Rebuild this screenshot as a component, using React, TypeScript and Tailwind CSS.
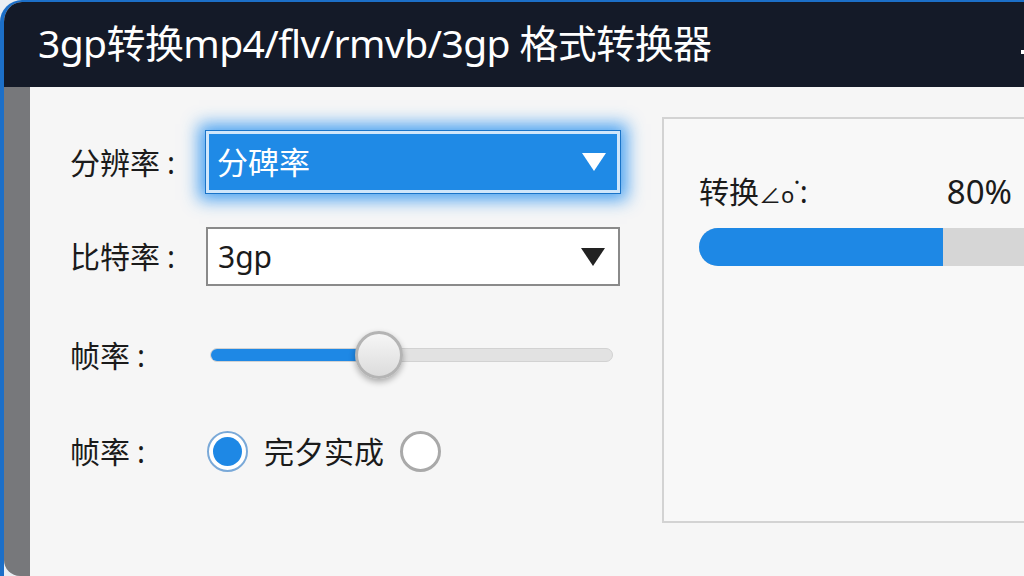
import React from "react";

const cjk = { fontFamily: '"Noto Sans", "Noto Sans CJK SC", sans-serif' };

function Triangle({ color }: { color: string }) {
  return (
    <svg width="26" height="20" viewBox="0 0 26 20">
      <path d="M1 1 H25 L13 19 Z" fill={color} />
    </svg>
  );
}

function Label({ text, width }: { text: string; width: string }) {
  return (
    <span className={`${width} shrink-0`}>
      {text}
      <span className="ml-[7px]">:</span>
    </span>
  );
}

export default function App() {
  return (
    <div className="w-[1024px] h-[576px] overflow-hidden bg-[#0b0d12]" style={cjk}>
      <div className="h-full bg-[#e9eef3]">
        <div className="h-full rounded-tl-[22px] border-l-[4px] border-t-[2px] border-[#1c6fc8] overflow-hidden flex flex-col">
          {/* title bar */}
          <div className="h-[85px] shrink-0 bg-[#141a28] flex items-center justify-between pl-[34px]">
            <h1 className="text-white text-[39px] tracking-[-0.6px] leading-none mt-[-4px]">
              3gp转换mp4/flv/rmvb/3gp 格式转换器
            </h1>
            <div className="w-[3px] h-[4px] bg-white mt-[14px]" />
          </div>

          <div className="flex flex-1 min-h-0">
            <div className="w-[26px] shrink-0 bg-[#77787b] rounded-bl-[16px]" />

            <div className="flex-1 bg-[#f6f6f6] flex">
              {/* settings column */}
              <div className="w-[632px] shrink-0 pl-[40px] pt-[44px] text-[30px] text-[#1b1b1b]">
                <div className="flex items-center h-[62px]">
                  <Label text="分辨率" width="w-[136px]" />
                  <div className="w-[414px] h-[62px] bg-[#1f8ae6] border-[3px] border-[#cfe6fb] outline outline-[1px] outline-[#1a74c8] shadow-[0_0_16px_7px_rgba(30,140,240,0.8)] flex items-center justify-between pl-[8px] pr-[10px]">
                    <span className="text-white text-[31px]">分碑率</span>
                    <Triangle color="#ffffff" />
                  </div>
                </div>

                <div className="flex items-center h-[59px] mt-[34px]">
                  <Label text="比特率" width="w-[136px]" />
                  <div className="w-[414px] h-[59px] bg-white border-[2px] border-[#8a8a8a] flex items-center justify-between pl-[10px] pr-[12px]">
                    <span>3gp</span>
                    <Triangle color="#222222" />
                  </div>
                </div>

                <div className="flex items-center h-[50px] mt-[44px]">
                  <Label text="帧率" width="w-[140px]" />
                  <div className="relative w-[403px] h-[14px] rounded-full bg-[#e2e2e2] border border-[#d2d2d2]">
                    <div className="h-full w-[168px] rounded-full bg-[#1e88e5]" />
                    <div className="absolute left-[144px] top-[-18px] w-[48px] h-[48px] rounded-full border-[3px] border-[#b4b4b4] bg-gradient-to-b from-[#f6f6f6] to-[#dcdcdc] shadow-[0_3px_6px_rgba(0,0,0,0.3)]" />
                  </div>
                </div>

                <div className="flex items-center h-[50px] mt-[46px]">
                  <Label text="帧率" width="w-[137px]" />
                  <div className="flex items-center">
                    <div className="w-[41px] h-[41px] rounded-full border-[2px] border-[#7aa9d8] bg-white flex items-center justify-center">
                      <div className="w-[29px] h-[29px] rounded-full bg-[#1e88e5]" />
                    </div>
                    <span className="ml-[16px]">完夕实成</span>
                    <div className="ml-[16px] w-[41px] h-[41px] rounded-full border-[3px] border-[#a9a9a9] bg-white" />
                  </div>
                </div>
              </div>

              {/* progress panel */}
              <div className="mt-[30px] w-[380px] h-[406px] shrink-0 border-[2px] border-[#d3d3d3] bg-[#f8f8f8] pl-[35px] pt-[48px]">
                <div className="flex items-center justify-between w-[313px] text-[30px] text-[#1b1b1b]">
                  <span>
                    转换<span className="text-[22px]">∠o</span>˙:
                  </span>
                  <span className="text-[33px]">80%</span>
                </div>
                <div className="mt-[11px] w-[345px] h-[38px] bg-[#d6d6d6] rounded-l-full flex">
                  <div className="w-[244px] h-full bg-[#1e88e5] rounded-l-full" />
                </div>
              </div>
            </div>
          </div>
        </div>
      </div>
    </div>
  );
}
